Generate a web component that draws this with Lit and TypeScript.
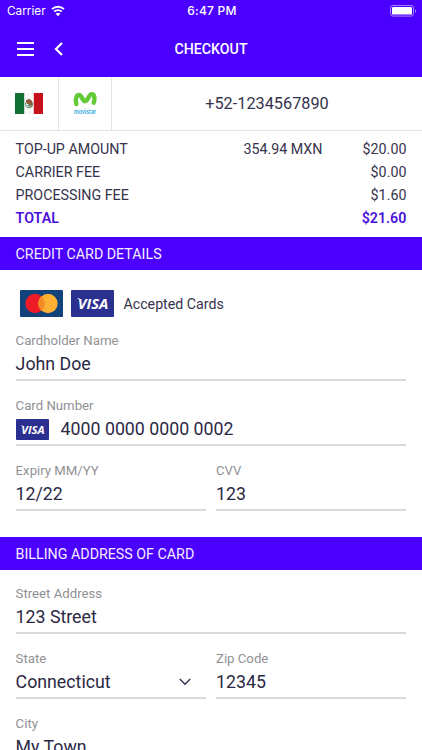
import { LitElement, html, css, svg } from "lit";
import { customElement, property } from "lit/decorators.js";

@customElement("visa-logo")
class VisaLogo extends LitElement {
  static styles = css`
    :host { display: block; }
    svg { display: block; width: 100%; height: 100%; }
    text { font: italic 700 14.6px "Open Sans", sans-serif; fill: #fff; }
  `;
  render() {
    return html`<svg viewBox="0 0 43 27" preserveAspectRatio="none">
      <rect width="43" height="27" rx="1" fill="#2b2f8f" />
      <path d="M5.8 8.3h2.6l1 2.6q-1.4-1.8-3.6-2.6z" fill="#fff" />
      <text x="6.8" y="18.7" textLength="30.5" lengthAdjust="spacingAndGlyphs">VISA</text>
    </svg>`;
  }
}

@customElement("form-field")
class FormField extends LitElement {
  @property() label = "";
  @property() value = "";
  static styles = css`
    :host { display: block; box-sizing: border-box; height: 65.1px; flex: 1; min-width: 0; font-family: Roboto, sans-serif; }
    .label { font-size: 13.2px; line-height: 17.4px; color: #919195; padding-top: 1.6px; white-space: nowrap; }
    .row { display: flex; align-items: center; height: 30px; border-bottom: 2px solid #d9d9d9; }
    .value { flex: 1; font-size: 17.75px; line-height: 28px; color: #2b2844; white-space: nowrap; }
  `;
  render() {
    return html`<div class="label">${this.label}</div>
      <div class="row"><slot name="start"></slot><span class="value">${this.value}</span><slot name="end"></slot></div>`;
  }
}

const wifi = svg`<path d="M1 4.2a8.6 8.6 0 0 1 12 0M3.2 6.6a5.4 5.4 0 0 1 7.6 0" fill="none" stroke="#fff" stroke-width="1.8"/><path d="M7 11.2 4.7 8.8a3.3 3.3 0 0 1 4.6 0z" fill="#fff"/>`;

@customElement("app-root")
class AppRoot extends LitElement {
  static styles = css`
    :host { display: block; height: 750px; overflow: hidden; background: #fff; font-family: Roboto, sans-serif; color: #36334c; }
    svg { display: block; flex: none; }
    .top { height: 76.6px; background: #4b00ff; color: #fff; }
    .status { display: grid; grid-template-columns: 1fr auto 1fr; align-items: center; height: 22px; padding: 0 6px 0 7px; font: 12px/22px Inter, sans-serif; }
    .carrier { display: flex; align-items: center; gap: 5px; font-size: 11.8px; }
    .time { font-weight: 500; letter-spacing: 0.25px; padding-left: 1px; }
    .battery { justify-self: end; }
    .nav { display: grid; grid-template-columns: 1fr auto 1fr; align-items: center; height: 53px; padding: 0 17px; }
    .actions { display: flex; align-items: center; gap: 20px; }
    .title { font-size: 14.2px; font-weight: 500; }
    .recipient { display: flex; height: 53px; border-bottom: 1px solid #e5e5e5; }
    .cell { display: flex; align-items: center; justify-content: center; width: 58px; border-right: 1px solid #e5e5e5; }
    .brand { width: 52px; }
    .brand-name { font: 600 6px Inter, sans-serif; fill: #29a9df; }
    .phone { flex: 1; display: flex; align-items: center; justify-content: center; font-size: 16.3px; }
    .fees { display: grid; grid-template-columns: 1fr auto 84px; grid-auto-rows: 23px; height: 99.5px; padding: 7.2px 15.6px 0; box-sizing: content-box; line-height: 23px; font-size: 14.25px; }
    .amount { text-align: right; }
    .total { color: #4b0fdc; font-weight: 600; }
    .band { height: 33px; padding: 0 15.6px; background: #4b00ff; color: #f3edff; font-size: 14.25px; line-height: 34px; }
    .cards { display: flex; align-items: center; height: 27px; padding: 20px 0 0 19.5px; gap: 8px; font-size: 14.2px; }
    .accepted { margin-left: 2px; }
    .visa { width: 43px; height: 27px; }
    .visa-small { width: 33px; height: 21px; margin-right: 12px; }
    .form { padding: 13px 15.6px 0; }
    .payment { padding-bottom: 11.5px; }
    .pair { display: flex; gap: 10px; }
    .chosen { margin-right: 15px; }
  `;
  render() {
    return html`
      <header class="top">
        <div class="status">
          <div class="carrier"><span>Carrier</span><svg width="14" height="12" viewBox="0 0 14 12">${wifi}</svg></div>
          <span class="time">6:47 PM</span>
          <svg class="battery" width="26" height="12" viewBox="0 0 26 12">
            <rect x=".5" y=".5" width="23" height="10.6" rx="2.5" fill="none" stroke="#a580ff"/>
            <rect x="2" y="2" width="20" height="7.6" rx="1.2" fill="#fff"/>
            <path d="M25 4v4q1-.5 1-2t-1-2z" fill="#a580ff"/>
          </svg>
        </div>
        <div class="nav">
          <div class="actions">
            <svg width="17" height="14" viewBox="0 0 17 14"><path d="M0 1h17M0 7h17M0 13h17" stroke="#fff" stroke-width="1.9"/></svg>
            <svg width="9" height="14" viewBox="0 0 9 14"><path d="M8 1 2 7l6 6" fill="none" stroke="#fff" stroke-width="2.2"/></svg>
          </div>
          <span class="title">CHECKOUT</span>
        </div>
      </header>
      <section class="recipient">
        <div class="cell">
          <svg width="28" height="21" viewBox="0 0 28 21">
            <rect width="28" height="21" fill="#f8f8f8"/><rect width="9.2" height="21" fill="#127236"/><rect x="18.8" width="9.2" height="21" fill="#c4111b"/>
            <path d="M10.7 9.5a3.7 3.7 0 1 0 6.8 0" fill="none" stroke="#6f9b65" stroke-width="1.1"/>
            <path d="M10.8 7.5 14 5.8l3 2 .7 3.4-2 2.5-3-.6 1.2-1.5-2.4-1z" fill="#8d5b39"/><path d="M12.5 12.3h3.3" stroke="#3d9aa0" stroke-width="1.2"/>
          </svg>
        </div>
        <div class="cell brand">
          <svg width="26" height="26" viewBox="0 0 26 26">
            <path d="M4.4 14C3 9.7 4.3 5 7 5c3 0 3.3 6.2 6.2 6.2 2.9 0 3.3-7 6.5-7 3.3 0 3.2 5.4 2 8.6" fill="none" stroke="#63c936" stroke-width="4.4" stroke-linecap="round"/>
            <text class="brand-name" x="2" y="24" textLength="22" lengthAdjust="spacingAndGlyphs">movistar</text>
          </svg>
        </div>
        <div class="phone">+52-1234567890</div>
      </section>
      <section class="fees">
        <span>TOP-UP AMOUNT</span><span>354.94 MXN</span><span class="amount">$20.00</span>
        <span>CARRIER FEE</span><span></span><span class="amount">$0.00</span>
        <span>PROCESSING FEE</span><span></span><span class="amount">$1.60</span>
        <span class="total">TOTAL</span><span></span><span class="amount total">$21.60</span>
      </section>
      <div class="band">CREDIT CARD DETAILS</div>
      <div class="cards">
        <svg width="43" height="27" viewBox="0 0 43 27">
          <rect width="43" height="27" rx="1" fill="#12427a"/><circle cx="15" cy="13.5" r="9.7" fill="#ed1c27"/><circle cx="28" cy="13.5" r="9.7" fill="#fbb034"/>
          <path d="M21.5 6.3a9.7 9.7 0 0 1 0 14.4 9.7 9.7 0 0 1 0-14.4" fill="#f38a23"/>
        </svg>
        <visa-logo class="visa"></visa-logo>
        <span class="accepted">Accepted Cards</span>
      </div>
      <section class="form payment">
        <form-field label="Cardholder Name" value="John Doe"></form-field>
        <form-field label="Card Number" value="4000 0000 0000 0002"><visa-logo slot="start" class="visa-small"></visa-logo></form-field>
        <div class="pair"><form-field label="Expiry MM/YY" value="12/22"></form-field><form-field label="CVV" value="123"></form-field></div>
      </section>
      <div class="band">BILLING ADDRESS OF CARD</div>
      <section class="form">
        <form-field label="Street Address" value="123 Street"></form-field>
        <div class="pair">
          <form-field label="State" value="Connecticut"><svg slot="end" class="chosen" width="12" height="8" viewBox="0 0 12 8"><path d="m.8 1 5.2 5.3L11.2 1" fill="none" stroke="#36334c" stroke-width="1.4"/></svg></form-field>
          <form-field label="Zip Code" value="12345"></form-field>
        </div>
        <form-field label="City" value="My Town"></form-field>
      </section>
    `;
  }
}
